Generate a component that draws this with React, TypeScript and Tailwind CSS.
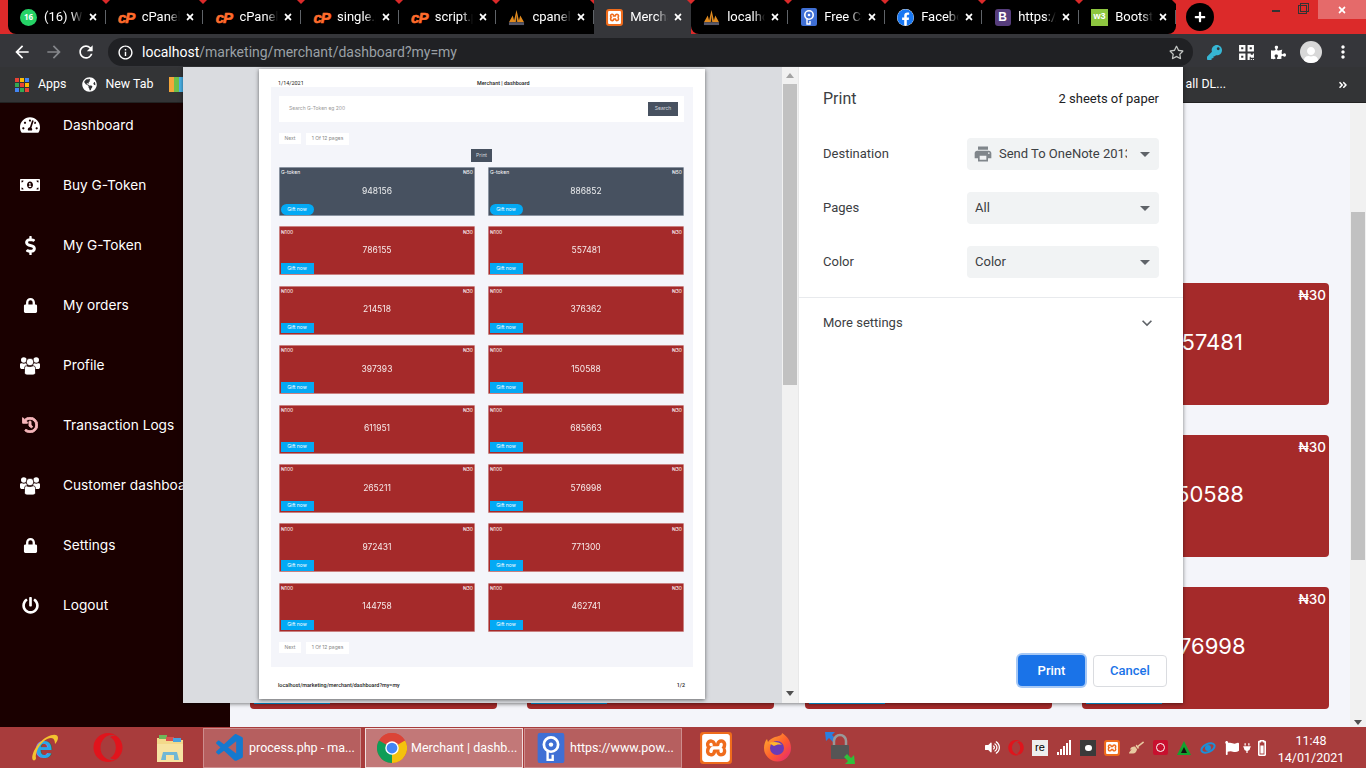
import React from "react";
import { FaTachometerAlt, FaMoneyBillAlt, FaDollarSign, FaLock, FaHistory, FaPowerOff, FaFacebook, FaOpera, FaRegStar, FaPuzzlePiece, FaKey, FaGlobeAmericas, FaUser, FaPlus, FaTimes, FaAngleDoubleRight, FaVolumeUp, FaBroom, FaFlag, FaBatteryThreeQuarters, FaPlug, FaQrcode } from "react-icons/fa";
import { SiXampp } from "react-icons/si";
import { VscVscode } from "react-icons/vsc";
import { MdPrint, MdInfoOutline, MdArrowBack, MdArrowForward, MdRefresh, MdMoreVert, MdExpandMore, MdArrowDropDown } from "react-icons/md";

const UI = "font-['Roboto','Open_Sans',sans-serif]";
const POP = "font-['Inter','Lato',sans-serif]";
const RB = "font-['Roboto','Liberation_Sans',sans-serif]";

function Mountain() {
  return (
    <svg viewBox="0 0 18 18" className="w-[17px] h-[17px]">
      <path d="M1 14 5 7l2 7zM6 14 9 1l3 13zM11 14l2-7 4 7z" fill="#e08a1e" />
      <path d="M8.2 14 9 6l.8 8z" fill="#222" />
      <rect x="1" y="14" width="16" height="3" fill="#56586a" />
    </svg>
  );
}

function CP() {
  return (
    <span className="text-[#ff6c2c] text-[15px] leading-none font-bold italic tracking-[-1px] font-['Liberation_Sans',sans-serif] [-webkit-text-stroke:0.6px_#ff6c2c]">cP</span>
  );
}

function Papaly() {
  return (
    <svg viewBox="0 0 16 18" className="w-[16px] h-[18px]">
      <rect width="16" height="18" rx="2" fill="#3f6fd4" />
      <circle cx="8" cy="7" r="4.2" fill="none" stroke="#fff" strokeWidth="1.6" />
      <circle cx="8" cy="7" r="1.3" fill="#fff" />
      <path d="M6 10v6h3v-3" fill="none" stroke="#fff" strokeWidth="1.4" />
    </svg>
  );
}

function Xampp({ s = 17 }: { s?: number }) {
  return (
    <span className="flex items-center justify-center bg-[#ef6c1c] rounded-[3px] text-white" style={{ width: s, height: s }}>
      <SiXampp size={s - 4} />
    </span>
  );
}

function Boot() {
  return (
    <span className="flex items-center justify-center w-[16px] h-[17px] bg-[#563d7c] rounded-[3px] text-white text-[12px] font-bold font-['Liberation_Sans',sans-serif]">B</span>
  );
}

function W3() {
  return (
    <span className="flex items-center justify-center w-[17px] h-[17px] bg-[#8dc63f] text-white text-[9px] font-bold font-['Liberation_Sans',sans-serif]">w3</span>
  );
}

function Users() {
  return (
    <svg viewBox="0 0 20 19" className="w-[20px] h-[19px]" fill="#fff">
      <circle cx="3.800" cy="4" r="2.800" />
      <circle cx="16.200" cy="4" r="2.800" />
      <path d="M0 8.500C0 7.500 1 7 2 7.300c1 .5 2.500.5 3.500 0L7 8v5H2c-1 0-2-.5-2-2zM20 8.500c0-1-1-1.500-2-1.200-1 .5-2.500.5-3.500 0L13 8v5h5c1 0 2-.5 2-2z" />
      <circle cx="10" cy="6" r="3.800" stroke="#1a0000" strokeWidth="0.800" />
      <path d="M4.500 12.500c0-2 1-3 2-2.700 2 1 4.500 1 6.500 0 1-.3 2.500.7 2.500 2.700v4c0 1.500-1 2.500-2.500 2.500H7c-1.500 0-2.500-1-2.500-2.500z" stroke="#1a0000" strokeWidth="0.800" />
    </svg>
  );
}

function Chrome({ s = 22 }: { s?: number }) {
  return (
    <svg viewBox="0 0 24 24" style={{ width: s, height: s }}>
      <circle cx="12" cy="12" r="12" fill="#db4437" />
      <path d="M12 12 22.400 6A12 12 0 0 1 12 24z" fill="#f4c20d" />
      <path d="M12 12 12 24A12 12 0 0 1 1.600 6z" fill="#0f9d58" />
      <path d="M1.600 6A12 12 0 0 1 12 0a12 12 0 0 1 10.400 6H12z" fill="#db4437" />
      <circle cx="12" cy="12" r="5.400" fill="#fff" />
      <circle cx="12" cy="12" r="4.300" fill="#4285f4" />
    </svg>
  );
}

function IE() {
  return (
    <svg viewBox="0 0 32 32" className="w-[32px] h-[32px]">
      <text x="15" y="26" textAnchor="middle" fontSize="32" fontWeight="700" fill="#2ba6e8" fontFamily="Liberation Sans, sans-serif">e</text>
      <path d="M4 28C1 24 8 10 18 5c6-3 11-3 11 1 0 2-2 5-3 6 0-3-1-6-4-6C13 7 6 19 7 26c0 2-2 3-3 2z" fill="#f3c32f" />
    </svg>
  );
}

function Explorer() {
  return (
    <svg viewBox="0 0 30 32" className="w-[30px] h-[32px]">
      <path d="M2 6h9l2 2h15v22H2z" fill="#f3d98a" />
      <rect x="4" y="3" width="8" height="4" fill="#6fb85a" />
      <rect x="11" y="5" width="8" height="4" fill="#d9534f" />
      <rect x="18" y="6" width="8" height="4" fill="#4aa3df" />
      <path d="M2 12h26v18H2z" fill="#f7e3a1" />
      <path d="M8 20h14l2 8h-5v-5h-8v5H6z" fill="#6fb7d6" />
    </svg>
  );
}

function Firefox() {
  return (
    <svg viewBox="0 0 32 32" className="w-[32px] h-[32px]">
      <defs>
        <linearGradient id="ff" x1="0" y1="0" x2="1" y2="1">
          <stop offset="0" stopColor="#ffb62e" />
          <stop offset="0.55" stopColor="#ff5a2e" />
          <stop offset="1" stopColor="#e3217c" />
        </linearGradient>
      </defs>
      <path d="M20 1c5 3 9 8 9 15A13.500 13.500 0 0 1 2 16c0-3 1-7 3-9l1 3c2-3 5-4 7-5 3-1 7-1 7-4z" fill="url(#ff)" />
      <circle cx="15" cy="16" r="7" fill="#6a3bb5" />
      <path d="M7 11c5-2 11-1 13 2-3-1-6 0-8 1z" fill="#ffb62e" />
    </svg>
  );
}

function VpnLock() {
  return (
    <svg viewBox="0 0 32 36" className="w-[32px] h-[36px]">
      <path d="M1 2h10L8 5l4 4-3 3-4-4-3 3z" fill="#2a7fe0" />
      <path d="M10 16v-5a6 6 0 0 1 12 0v5" fill="none" stroke="#999" strokeWidth="2.500" />
      <rect x="7" y="15" width="18" height="14" rx="1" fill="#555" />
      <path d="M31 34H21l3-3-4-4 3-3 4 4 3-3z" fill="#2fbf3a" />
    </svg>
  );
}

type TabT = { icon: React.ReactNode; title: string };

function Tab({ icon, title, active, narrow }: TabT & { active?: boolean; narrow?: boolean }) {
  return (
    <div className={`relative h-[34px] flex items-center pl-[12px] pr-[8px] ${narrow ? "w-[97px]" : "w-[97.700px]"} ${active ? "bg-[#35363a]" : ""}`}>
      <span className="w-[17px] flex justify-center shrink-0">{icon}</span>
      <span className={`ml-[7px] w-[45px] overflow-hidden whitespace-nowrap text-white text-[13px] [mask-image:linear-gradient(to_right,black_70%,transparent)] ${UI}`}>{title}</span>
      <FaTimes className="ml-[5px] text-white shrink-0" size={10} />
      {!active && <span className="absolute right-0 top-[10px] h-[14px] w-px bg-[#5f6368]" />}
      <span className="absolute -right-[4px] top-0 w-0 h-0 border-x-[4px] border-x-transparent border-t-[4px] border-t-[#dc2a2a]" />
    </div>
  );
}

const leftTabs: TabT[] = [
  { icon: <span className="flex items-center justify-center w-[17px] h-[17px] rounded-full bg-[#25d366] text-white text-[8px] font-bold">16</span>, title: "(16) WhatsApp" },
  { icon: <CP />, title: "cPanel" },
  { icon: <CP />, title: "cPanel" },
  { icon: <CP />, title: "single.php" },
  { icon: <CP />, title: "script.php" },
  { icon: <Mountain />, title: "cpanel" },
];
const rightTabs: TabT[] = [
  { icon: <Mountain />, title: "localhost" },
  { icon: <Papaly />, title: "Free Code" },
  { icon: <FaFacebook className="text-[#1877f2] bg-white rounded-full" size={17} />, title: "Facebook" },
  { icon: <Boot />, title: "https://boot" },
  { icon: <W3 />, title: "Bootstrap" },
];

function TabStrip() {
  return (
    <div className="h-[34px] shrink-0 bg-[#dc2a2a] flex pl-[8px]">
      <div className="flex bg-black rounded-bl-[8px]">
        {leftTabs.map((t, i) => <Tab key={i} {...t} />)}
      </div>
      <Tab icon={<Xampp />} title="Merchant" active narrow />
      <div className="flex bg-black rounded-br-[8px] rounded-bl-[8px]">
        {rightTabs.map((t, i) => <Tab key={i} narrow {...t} />)}
      </div>
      <div className="ml-[10px] mt-[3px] w-[28px] h-[28px] rounded-full bg-black flex items-center justify-center text-white">
        <FaPlus size={12} />
      </div>
      <div className="ml-auto flex h-[19px] items-center text-white">
        <span className="w-[8px] h-[2px] bg-[#333] mr-[18px] mt-[2px]" />
        <span className="relative w-[9px] h-[9px] border border-[#333] mr-[11px] before:content-[''] before:absolute before:-top-[3px] before:left-[1px] before:w-[9px] before:h-[9px] before:border before:border-[#333]" />
        <span className="w-[48px] h-[19px] bg-[#e56a6a] flex items-center justify-center"><FaTimes size={10} /></span>
      </div>
    </div>
  );
}

function Toolbar() {
  return (
    <div className="h-[33px] shrink-0 bg-[#35363a] flex items-center pt-[3px]">
      <MdArrowBack className="ml-[12px] text-white" size={20} />
      <MdArrowForward className="ml-[12px] text-[#85878b]" size={20} />
      <MdRefresh className="ml-[12px] text-white" size={20} />
      <div className="ml-[12px] w-[1085px] h-[28px] rounded-full bg-[#202124] flex items-center pl-[9px] pr-[9px]">
        <MdInfoOutline className="text-white" size={17} />
        <span className={`ml-[8px] text-[14px] text-[#9aa0a6] ${RB}`}><span className="text-white">localhost</span>/marketing/merchant/dashboard?my=my</span>
        <FaRegStar className="ml-auto text-[#c4c7c5]" size={15} />
      </div>
      <FaKey className="ml-[14px] text-[#36b6d4]" size={15} />
      <FaQrcode className="ml-[16px] text-white" size={17} />
      <FaPuzzlePiece className="ml-[16px] text-white" size={15} />
      <span className="ml-[14px] w-[22px] h-[22px] rounded-full bg-[#d8d8d8] flex items-end justify-center overflow-hidden text-white"><FaUser size={16} /></span>
      <MdMoreVert className="ml-[11px] text-white" size={20} />
    </div>
  );
}

function Bookmarks() {
  const colors = ["#ea4335", "#fbbc04", "#4285f4", "#34a853", "#ea4335", "#fbbc04", "#4285f4", "#34a853", "#ea4335"];
  return (
    <div className={`h-[36px] shrink-0 bg-[#333436] border-b border-[#222] flex items-center text-white text-[12.400px] ${UI}`}>
      <span className="ml-[15px] grid grid-cols-3 gap-[1px] w-[14px] h-[14px]">
        {colors.map((c, i) => <span key={i} style={{ backgroundColor: c }} />)}
      </span>
      <span className="ml-[9px]">Apps</span>
      <FaGlobeAmericas className="ml-[16px]" size={15} />
      <span className="ml-[8px]">New Tab</span>
      <span className="ml-[16px] flex h-[15px]">
        <span className="w-[5px] bg-[#f4a63a]" /><span className="w-[5px] bg-[#6cc04a]" /><span className="w-[5px] bg-[#4ab2e8]" />
      </span>
      <span className="ml-auto whitespace-nowrap">Save all DL...</span>
      <FaAngleDoubleRight className="ml-[112px] mr-[18px]" size={10} />
    </div>
  );
}

const sideItems: [React.ReactNode, string][] = [
  [<FaTachometerAlt size={20} />, "Dashboard"],
  [<FaMoneyBillAlt size={20} />, "Buy G-Token"],
  [<FaDollarSign size={19} />, "My G-Token"],
  [<FaLock size={15} />, "My orders"],
  [<Users />, "Profile"],
  [<FaHistory size={16} stroke="#f7b6bb" strokeWidth={30} className="text-[#f7b6bb]" />, "Transaction Logs"],
  [<Users />, "Customer dashboard"],
  [<FaLock size={15} />, "Settings"],
  [<FaPowerOff size={17} />, "Logout"],
];

function Sidebar() {
  return (
    <div className={`w-[230px] shrink-0 bg-[#1a0000] flex flex-col gap-[36px] pt-[10px] text-white text-[13.700px] ${POP}`}>
      {sideItems.map(([ic, t], i) => (
        <div key={i} className="h-[24px] flex items-center">
          <span className="w-[60px] flex justify-center">{ic}</span>
          <span className="ml-[3px] whitespace-nowrap">{t}</span>
        </div>
      ))}
    </div>
  );
}

function BigCard({ n }: { n: string }) {
  return (
    <div className={`h-[122px] rounded-[4px] bg-[#a52a2a] flex flex-col text-white ${POP}`}>
      <div className="h-[24px] flex items-center justify-between pl-[4px] pr-[3px] text-[13.500px] font-medium">
        <span>₦100</span><span>₦30</span>
      </div>
      <div className="h-[70px] flex items-center justify-center text-[22px]">{n}</div>
      <div className="-mt-[3px] ml-[4px] w-[76px] h-[26px] bg-[#03a9f4] flex items-center justify-center text-[12px]">Gift now</div>
    </div>
  );
}

function MainPage() {
  const nums = ["948156", "886852", "786155", "557481", "214518", "376362", "397393", "150588", "611951", "685663", "265211", "576998"];
  return (
    <div className="flex-1 bg-[#f4f5fa] flex">
      <div className="flex-1 pl-[20px] pt-[180px] pr-[21px]">
        <div className="grid grid-cols-4 gap-x-[30.500px] gap-y-[30px]">
          {nums.map((n) => <BigCard key={n} n={n} />)}
        </div>
      </div>
      <div className="w-[16px] bg-[#f1f1f1] flex flex-col items-center pt-[109px]">
        <div className="w-[14px] h-[348px] bg-[#c1c1c1]" />
        <span className="mt-[160px] w-0 h-0 border-x-[4px] border-x-transparent border-t-[5px] border-t-[#505050]" />
      </div>
    </div>
  );
}

function MiniCard({ n, slate }: { n: string; slate?: boolean }) {
  return (
    <div className={`h-[49px] rounded-[1px] border-[0.500px] flex flex-col text-white px-[0.500px] ${slate ? "bg-[#475160] border-[#8a93a0]" : "bg-[#a52a2a] border-[#c98080]"}`}>
      <div className="h-[10px] flex justify-between items-center text-[5px] px-[0.500px]">
        <span>{slate ? "G-token" : "₦100"}</span><span>{slate ? "₦50" : "₦30"}</span>
      </div>
      <div className="h-[26px] flex items-center justify-center text-[8.500px] opacity-90">{n}</div>
      <div className={`w-[33px] h-[10.500px] bg-[#03a9f4] flex items-center justify-center text-[5px] ${slate ? "rounded-full" : ""}`}>Gift now</div>
    </div>
  );
}

function Pager() {
  return (
    <div className="flex gap-[5px] items-start text-[5px] text-[#888]">
      <span className="w-[22px] h-[11px] bg-white flex items-center justify-center">Next</span>
      <span className="w-[43px] h-[12px] bg-white flex items-center justify-center">1 Of 12 pages</span>
    </div>
  );
}

function PrintPage() {
  const nums = ["948156", "886852", "786155", "557481", "214518", "376362", "397393", "150588", "611951", "685663", "265211", "576998", "972431", "771300", "144758", "462741"];
  return (
    <div className="w-[446px] h-[630px] bg-white shadow-[0_1px_4px_rgba(0,0,0,0.55)] flex flex-col px-[12px]">
      <div className={`h-[18px] pt-[10px] flex items-center pl-[7px] pr-[8px] text-[5.400px] text-[#222] ${UI}`}>
        <span className="w-[199px] shrink-0">1/14/2021</span>
        <span className="font-medium">Merchant | dashboard</span>
      </div>
      <div className={`h-[580px] bg-[#f4f5fa] pl-[8px] pr-[9px] pt-[9px] ${POP}`}>
        <div className="h-[26px] bg-white flex items-center justify-between pl-[10px] pr-[6px] text-[5px]">
          <span className="text-[#999]">Search G-Token eg 200</span>
          <span className="w-[30px] h-[13.500px] bg-[#475160] text-[#d5d8dd] flex items-center justify-center">Search</span>
        </div>
        <div className="mt-[11px]"><Pager /></div>
        <div className="mt-[4px] mx-auto w-[21px] h-[13px] bg-[#475160] text-[#d5d8dd] text-[5px] flex items-center justify-center">Print</div>
        <div className="mt-[5px] grid grid-cols-2 gap-x-[13px] gap-y-[10.400px]">
          {nums.map((n, i) => <MiniCard key={n} n={n} slate={i < 2} />)}
        </div>
        <div className="mt-[10.500px]"><Pager /></div>
      </div>
      <div className={`flex-1 flex items-center justify-between pl-[7px] pr-[8px] pt-[4px] text-[5.400px] text-[#222] font-medium ${UI}`}>
        <span>localhost/marketing/merchant/dashboard?my=my</span>
        <span>1/2</span>
      </div>
    </div>
  );
}

function Field({ label, children, icon }: { label: string; children: string; icon?: boolean }) {
  return (
    <div className="h-[32px] flex items-center">
      <span className="w-[144px] text-[#3c4043]">{label}</span>
      <div className="w-[192px] h-[32px] rounded-[4px] bg-[#f1f3f4] flex items-center pl-[8px] text-[#3c4043]">
        {icon && <MdPrint className="text-[#80868b] mr-[6px] -ml-[2px] shrink-0" size={20} />}
        <span className={`overflow-hidden whitespace-nowrap ${icon ? "w-[128px]" : "flex-1"}`}>{children}</span>
        <MdArrowDropDown className="ml-auto mr-[2px] text-[#5f6368] shrink-0" size={24} />
      </div>
    </div>
  );
}

function Settings() {
  return (
    <div className={`w-[384px] h-full bg-white flex flex-col text-[13px] ${RB}`}>
      <div className="px-[24px] pt-[21px] flex justify-between items-center h-[42px] text-[#202124]">
        <span className="text-[16px] text-[#3c4043]">Print</span>
        <span className="text-[13px]">2 sheets of paper</span>
      </div>
      <div className="mt-[29px] px-[24px] flex flex-col gap-[22px]">
        <Field label="Destination" icon>Send To OneNote 2013</Field>
        <Field label="Pages">All</Field>
        <Field label="Color">Color</Field>
      </div>
      <div className="mt-[19px] border-t border-[#e8eaed] h-[50px] pl-[24px] pr-[26px] flex items-center justify-between text-[#3c4043]">
        <span>More settings</span>
        <MdExpandMore className="text-[#5f6368]" size={20} />
      </div>
      <div className="mt-auto mb-[16px] pr-[16px] flex justify-end gap-[8px]">
        <span className="w-[67px] h-[31px] rounded-[4px] bg-[#1a73e8] ring-2 ring-[#a6c8f5] flex items-center justify-center text-white font-medium">Print</span>
        <span className="w-[74px] h-[32px] rounded-[4px] border border-[#dadce0] flex items-center justify-center text-[#1a73e8] font-medium">Cancel</span>
      </div>
    </div>
  );
}

function Dialog() {
  return (
    <div className="absolute left-[183px] top-[67px] w-[1000px] h-[636px] flex shadow-[0_1px_4px_rgba(0,0,0,0.5)]">
      <div className="w-[599px] h-full bg-[#dadce0] pt-[2px] pl-[76px]">
        <PrintPage />
      </div>
      <div className="w-[16px] h-full bg-[#f1f1f1] flex flex-col items-center pt-[6px]">
        <span className="w-0 h-0 border-x-[4px] border-x-transparent border-b-[5px] border-b-[#a3a3a3]" />
        <span className="mt-[6px] w-[14px] h-[301px] bg-[#c1c1c1]" />
        <span className="mt-[306px] w-0 h-0 border-x-[4px] border-x-transparent border-t-[5px] border-t-[#505050]" />
      </div>
      <div className="w-px bg-[#e8e8e8]" />
      <Settings />
    </div>
  );
}

function Task({ icon, text, active }: { icon: React.ReactNode; text: string; active?: boolean }) {
  return (
    <div className={`w-[158px] h-[40px] mt-[1px] flex items-center pl-[8px] border ${active ? "bg-[#c27878] border-[#f1dede]" : "bg-[#b65f5f] border-[#cd8d8d]"}`}>
      <span className="w-[36px] flex justify-center shrink-0">{icon}</span>
      <span className={`ml-[1px] whitespace-nowrap text-white text-[12.500px] ${UI}`}>{text}</span>
    </div>
  );
}

function Taskbar() {
  const bar = [3, 6, 9, 12, 15];
  return (
    <div className="h-[41px] shrink-0 bg-[#a83c3c] flex items-center">
      <span className="ml-[29px] w-[32px] flex justify-center"><IE /></span>
      <span className="ml-[31px] w-[32px] flex justify-center"><FaOpera size={30} className="text-[#e0141c]" /></span>
      <span className="ml-[30px] w-[32px] flex justify-center"><Explorer /></span>
      <div className="ml-[17px] flex gap-[4px]">
        <Task icon={<VscVscode size={33} className="text-[#1479cf]" />} text="process.php - ma..." />
        <div className="-mr-[3px]"><Task icon={<Chrome s={30} />} text="Merchant | dashb..." active /></div>
        <Task icon={<span className="scale-[1.7] block"><Papaly /></span>} text="https://www.pow..." />
      </div>
      <span className="ml-[18px]"><Xampp s={32} /></span>
      <span className="ml-[30px]"><Firefox /></span>
      <span className="ml-[30px]"><VpnLock /></span>
      <div className="ml-[124px] flex items-center w-[288px] shrink-0 text-white">
        {[
          <FaVolumeUp size={15} />,
          <FaOpera size={16} className="text-[#e0141c]" />,
          <span className="w-[16px] h-[16px] bg-[#eee] text-black text-[11px] leading-[14px] text-center font-['Liberation_Sans',sans-serif]">re</span>,
          <span className="flex items-end gap-[1px] h-[15px]">{bar.map((h) => <span key={h} className="w-[2px] bg-white" style={{ height: h }} />)}</span>,
          <span className="w-[16px] h-[16px] bg-[#3a3a3a] flex items-center justify-center"><span className="w-[7px] h-[6px] rounded-full bg-white" /></span>,
          <Xampp s={16} />,
          <FaBroom size={15} className="text-[#e8c9a0]" />,
          <span className="w-[15px] h-[15px] bg-[#c8102e] rounded-[2px] border-[3px] border-[#c8102e] flex"><span className="flex-1 rounded-full border border-white" /></span>,
          <svg viewBox="0 0 16 16" className="w-[16px] h-[16px]"><path d="M8 1 15 15H1z" fill="#12a32e" /><path d="M8 7l3 6H5z" fill="#111" /></svg>,
          <svg viewBox="0 0 16 16" className="w-[16px] h-[16px]"><ellipse cx="8" cy="8" rx="7" ry="4" fill="none" stroke="#1c8fd6" strokeWidth="2" transform="rotate(-25 8 8)" /><circle cx="8" cy="8" r="3" fill="#1c8fd6" /></svg>,
          <FaFlag size={14} />,
          <span className="flex items-center gap-[2px]"><FaPlug size={10} /><FaBatteryThreeQuarters size={16} className="rotate-[-90deg]" /></span>,
        ].map((ic, i) => <span key={i} className="w-[24px] flex justify-center shrink-0">{ic}</span>)}
      </div>
      <div className={`w-[86px] shrink-0 pt-[3px] flex flex-col items-center text-white text-[12.500px] leading-[17px] ${UI}`}>
        <span>11:48</span>
        <span>14/01/2021</span>
      </div>
    </div>
  );
}

export default function App() {
  return (
    <div className="relative w-[1366px] h-[768px] overflow-hidden flex flex-col">
      <TabStrip />
      <Toolbar />
      <Bookmarks />
      <div className="flex-1 flex min-h-0 overflow-hidden">
        <Sidebar />
        <MainPage />
      </div>
      <Taskbar />
      <Dialog />
    </div>
  );
}
